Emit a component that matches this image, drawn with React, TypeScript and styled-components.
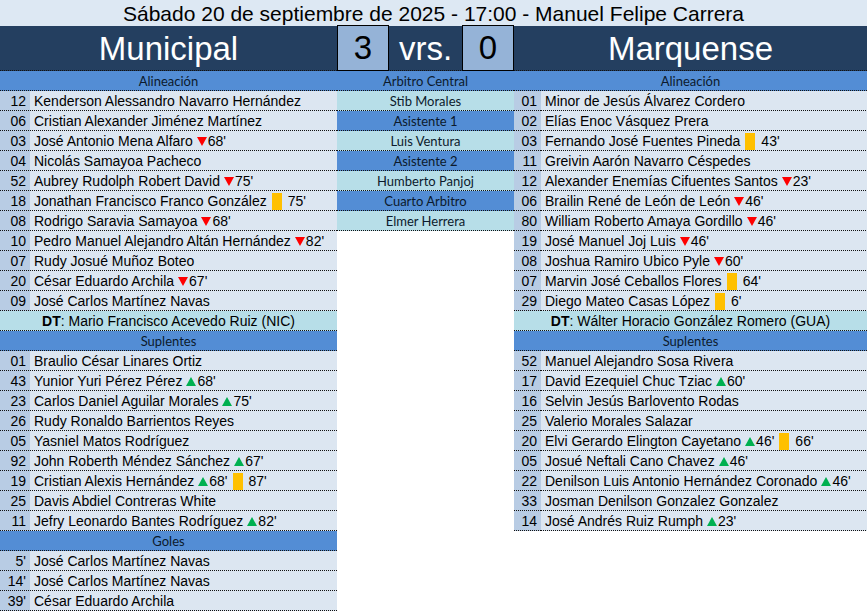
import styled, { createGlobalStyle } from 'styled-components';

type EventKind = 'out' | 'in' | 'yellow';

interface MatchEvent {
  kind: EventKind;
  minute: string;
}

interface Player {
  num: string;
  name: string;
  events?: MatchEvent[];
}

const out = (minute: string): MatchEvent => ({ kind: 'out', minute });
const sub = (minute: string): MatchEvent => ({ kind: 'in', minute });
const yellow = (minute: string): MatchEvent => ({ kind: 'yellow', minute });

const homeLineup: Player[] = [
  { num: '12', name: 'Kenderson Alessandro Navarro Hernández' },
  { num: '06', name: 'Cristian Alexander Jiménez Martínez' },
  { num: '03', name: 'José Antonio Mena Alfaro', events: [out("68'")] },
  { num: '04', name: 'Nicolás Samayoa Pacheco' },
  { num: '52', name: 'Aubrey Rudolph Robert David', events: [out("75'")] },
  { num: '18', name: 'Jonathan Francisco Franco González', events: [yellow("75'")] },
  { num: '08', name: 'Rodrigo Saravia Samayoa', events: [out("68'")] },
  { num: '10', name: 'Pedro Manuel Alejandro Altán Hernández', events: [out("82'")] },
  { num: '07', name: 'Rudy Josué Muñoz Boteo' },
  { num: '20', name: 'César Eduardo Archila', events: [out("67'")] },
  { num: '09', name: 'José Carlos Martínez Navas' },
];

const homeSubs: Player[] = [
  { num: '01', name: 'Braulio César Linares Ortiz' },
  { num: '43', name: 'Yunior Yuri Pérez Pérez', events: [sub("68'")] },
  { num: '23', name: 'Carlos Daniel Aguilar Morales', events: [sub("75'")] },
  { num: '26', name: 'Rudy Ronaldo Barrientos Reyes' },
  { num: '05', name: 'Yasniel Matos Rodríguez' },
  { num: '92', name: 'John Roberth Méndez Sánchez', events: [sub("67'")] },
  { num: '19', name: 'Cristian Alexis Hernández', events: [sub("68'"), yellow("87'")] },
  { num: '25', name: 'Davis Abdiel Contreras White' },
  { num: '11', name: 'Jefry Leonardo Bantes Rodríguez', events: [sub("82'")] },
];

const homeGoals: Player[] = [
  { num: "5'", name: 'José Carlos Martínez Navas' },
  { num: "14'", name: 'José Carlos Martínez Navas' },
  { num: "39'", name: 'César Eduardo Archila' },
];

const awayLineup: Player[] = [
  { num: '01', name: 'Minor de Jesús Álvarez Cordero' },
  { num: '02', name: 'Elías Enoc Vásquez Prera' },
  { num: '03', name: 'Fernando José Fuentes Pineda', events: [yellow("43'")] },
  { num: '11', name: 'Greivin Aarón Navarro Céspedes' },
  { num: '12', name: 'Alexander Enemías Cifuentes Santos', events: [out("23'")] },
  { num: '06', name: 'Brailin René de León de León', events: [out("46'")] },
  { num: '80', name: 'William Roberto Amaya Gordillo', events: [out("46'")] },
  { num: '19', name: 'José Manuel Joj Luis', events: [out("46'")] },
  { num: '08', name: 'Joshua Ramiro Ubico Pyle', events: [out("60'")] },
  { num: '07', name: 'Marvin José Ceballos Flores', events: [yellow("64'")] },
  { num: '29', name: 'Diego Mateo Casas López', events: [yellow("6'")] },
];

const awaySubs: Player[] = [
  { num: '52', name: 'Manuel Alejandro Sosa Rivera' },
  { num: '17', name: 'David Ezequiel Chuc Tziac', events: [sub("60'")] },
  { num: '16', name: 'Selvin Jesús Barlovento Rodas' },
  { num: '25', name: 'Valerio Morales Salazar' },
  { num: '20', name: 'Elvi Gerardo Elington Cayetano', events: [sub("46'"), yellow("66'")] },
  { num: '05', name: 'Josué Neftali Cano Chavez', events: [sub("46'")] },
  { num: '22', name: 'Denilson Luis Antonio Hernández Coronado', events: [sub("46'")] },
  { num: '33', name: 'Josman Denilson Gonzalez Gonzalez' },
  { num: '14', name: 'José Andrés Ruiz Rumph', events: [sub("23'")] },
];

const officials = [
  { text: 'Arbitro Central', role: true },
  { text: 'Stib Morales', role: false },
  { text: 'Asistente 1', role: true },
  { text: 'Luis Ventura', role: false },
  { text: 'Asistente 2', role: true },
  { text: 'Humberto Panjoj', role: false },
  { text: 'Cuarto Arbitro', role: true },
  { text: 'Elmer Herrera', role: false },
];

const GlobalStyle = createGlobalStyle`
  html, body {
    margin: 0;
    padding: 0;
    background: #ffffff;
  }
  body {
    font-family: 'Liberation Sans', Arial, sans-serif;
  }
`;

// Excel-style hair dotted line drawn along the bottom edge of a cell
const dottedLine = (fill: string) => `
  height: 20px;
  box-sizing: border-box;
  background:
    repeating-linear-gradient(to right, #111 0 1px, transparent 1px 2px) left bottom / 100% 1px no-repeat,
    ${fill};
`;

const Sheet = styled.div`
  width: 867px;
  height: 611px;
  overflow: hidden;
  background: #ffffff;
`;

const Title = styled.div`
  height: 26px;
  background: #dde8f3;
  color: #000;
  font-size: 21px;
  line-height: 28px;
  text-align: center;
  white-space: nowrap;
`;

const Scoreboard = styled.div`
  display: grid;
  grid-template-columns: 337px 52px 73px 52px 1fr;
  height: 45px;
  background:
    repeating-linear-gradient(to right, #111 0 1px, transparent 1px 2px) left bottom / 100% 1px no-repeat,
    #243f60;
`;

const TeamName = styled.div`
  color: #ffffff;
  font-size: 33px;
  line-height: 46px;
  text-align: center;
`;

const ScoreBox = styled.div`
  margin-top: -1px;
  height: 46px;
  box-sizing: border-box;
  border: 1px solid #000;
  background: #95b3d7;
  color: #000;
  font-size: 33px;
  line-height: 44px;
  text-align: center;
`;

const Versus = styled(TeamName)``;

const Body = styled.div`
  display: grid;
  grid-template-columns: 337px 177px 353px;
  align-items: start;
`;

const Column = styled.div`
  display: flex;
  flex-direction: column;
`;

const SectionHeader = styled.div`
  ${dottedLine('#538dd5')}
  color: #0c1a2c;
  font-family: Lato, 'Open Sans', sans-serif;
  font-size: 13px;
  line-height: 20px;
  text-align: center;
`;

const Row = styled.div<{ $numWidth: number }>`
  display: grid;
  grid-template-columns: ${({ $numWidth }) => $numWidth}px 1fr;
  font-size: 14px;
  line-height: 20px;
  color: #000;
`;

const NumCell = styled.div`
  ${dottedLine('#b8cce4')}
  text-align: right;
  padding-right: 4px;
`;

const NameCell = styled.div`
  ${dottedLine('#dce6f1')}
  padding-left: 4px;
  white-space: nowrap;
  display: flex;
  align-items: center;
`;

const CoachRow = styled.div`
  ${dottedLine('#b7dee8')}
  font-size: 14px;
  line-height: 20px;
  text-align: center;
  white-space: nowrap;
`;

const OfficialCell = styled.div<{ $role: boolean }>`
  ${({ $role }) => dottedLine($role ? '#538dd5' : '#b7dee8')}
  color: #0c1a2c;
  font-family: Lato, 'Open Sans', sans-serif;
  font-size: 13px;
  line-height: 20px;
  text-align: center;
`;

const Arrow = styled.span<{ $up: boolean }>`
  display: inline-block;
  width: 0;
  height: 0;
  margin: 0 1px 0 4px;
  border-left: 5px solid transparent;
  border-right: 5px solid transparent;
  ${({ $up }) =>
    $up ? 'border-bottom: 9px solid #00b050;' : 'border-top: 9px solid #ff0000;'}
`;

const Card = styled.span`
  display: inline-block;
  width: 10px;
  height: 17px;
  margin: 0 6px 0 5px;
  background: #ffc000;
`;

const Event = ({ kind, minute }: MatchEvent) => {
  if (kind === 'yellow') {
    return (
      <>
        <Card />
        {minute}
      </>
    );
  }
  return (
    <>
      <Arrow $up={kind === 'in'} />
      {minute}
    </>
  );
};

const PlayerRow = ({ player, numWidth }: { player: Player; numWidth: number }) => (
  <Row $numWidth={numWidth}>
    <NumCell>{player.num}</NumCell>
    <NameCell>
      {player.name}
      {player.events?.map((e, i) => (
        <Event key={i} kind={e.kind} minute={e.minute} />
      ))}
    </NameCell>
  </Row>
);

const App = () => (
  <>
    <GlobalStyle />
    <Sheet>
      <Title>Sábado 20 de septiembre de 2025 - 17:00 - Manuel Felipe Carrera</Title>
      <Scoreboard>
        <TeamName>Municipal</TeamName>
        <ScoreBox>3</ScoreBox>
        <Versus>vrs.</Versus>
        <ScoreBox>0</ScoreBox>
        <TeamName>Marquense</TeamName>
      </Scoreboard>
      <Body>
        <Column>
          <SectionHeader>Alineación</SectionHeader>
          {homeLineup.map((p) => (
            <PlayerRow key={p.num + p.name} player={p} numWidth={30} />
          ))}
          <CoachRow>
            <b>DT</b>: Mario Francisco Acevedo Ruiz (NIC)
          </CoachRow>
          <SectionHeader>Suplentes</SectionHeader>
          {homeSubs.map((p) => (
            <PlayerRow key={p.num + p.name} player={p} numWidth={30} />
          ))}
          <SectionHeader>Goles</SectionHeader>
          {homeGoals.map((p) => (
            <PlayerRow key={p.num + p.name} player={p} numWidth={30} />
          ))}
        </Column>
        <Column>
          {officials.map((o) => (
            <OfficialCell key={o.text} $role={o.role}>
              {o.text}
            </OfficialCell>
          ))}
        </Column>
        <Column>
          <SectionHeader>Alineación</SectionHeader>
          {awayLineup.map((p) => (
            <PlayerRow key={p.num + p.name} player={p} numWidth={27} />
          ))}
          <CoachRow>
            <b>DT</b>: Wálter Horacio González Romero (GUA)
          </CoachRow>
          <SectionHeader>Suplentes</SectionHeader>
          {awaySubs.map((p) => (
            <PlayerRow key={p.num + p.name} player={p} numWidth={27} />
          ))}
        </Column>
      </Body>
    </Sheet>
  </>
);

export default App;
